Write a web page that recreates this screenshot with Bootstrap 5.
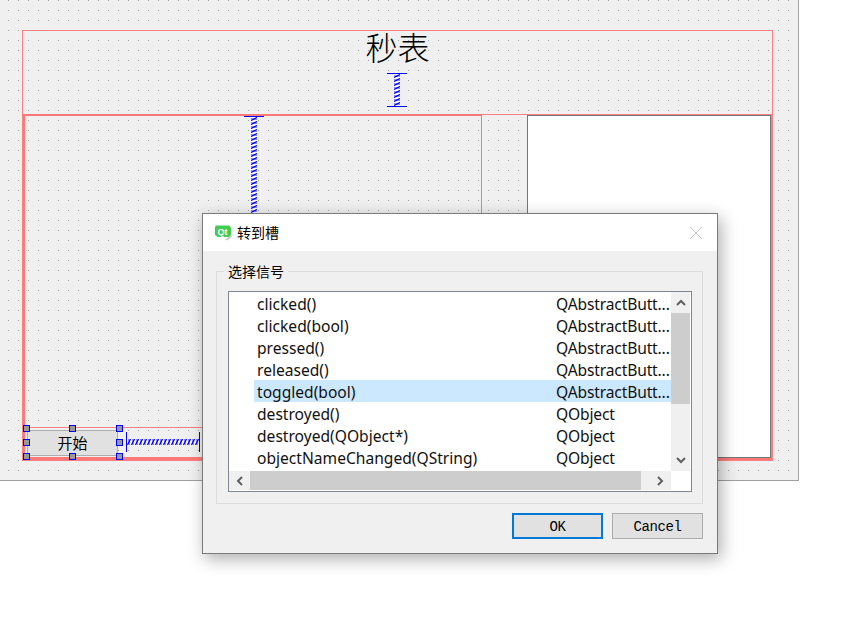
<!DOCTYPE html>
<html lang="zh">
<head>
<meta charset="utf-8">
<title>转到槽</title>
<link rel="stylesheet" href="https://cdn.jsdelivr.net/npm/bootstrap@5.3.0/dist/css/bootstrap.min.css">
<style>
html,body{margin:0;background:#fff;overflow:hidden}
body{width:855px;height:636px;position:relative;font-family:"Noto Sans","Noto Sans CJK SC",sans-serif;color:#000}
.form-sheet{width:799px;height:481px;padding:30px 0 0 22px;background-color:#f0f0f0;border-right:1px solid #a0a0a0;border-bottom:1px solid #a0a0a0;
 background-image:url("data:image/svg+xml,%3Csvg xmlns='http://www.w3.org/2000/svg' width='10' height='10'%3E%3Crect x='8' y='0' width='1' height='1' fill='%23a0a0a0'/%3E%3C/svg%3E")}
.outer-lay{width:751px;height:431px;border:1px solid #ff8080}
.title-zone{height:83px}
.title-txt{font-family:"Noto Sans CJK SC",sans-serif;font-size:32px;line-height:36px;margin-top:-3px;color:#000;font-weight:300}
.v-spring{width:20px;background:url("data:image/svg+xml,%3Csvg xmlns='http://www.w3.org/2000/svg' width='6' height='4'%3E%3Crect width='6' height='4' fill='%23fff' fill-opacity='.7'/%3E%3Cpath d='M0 3.500L6 .5' stroke='%230000ff' stroke-width='1.300' fill='none'/%3E%3Cpath d='M0 1.500L6 2.500' stroke='%230000ff' stroke-width='.5' fill='none'/%3E%3C/svg%3E") center top/6px 4px repeat-y;border-top:1px solid #00f;border-bottom:1px solid #00f}
.v-spring.short{height:34px;margin-top:9px;margin-right:1px}
.v-spring.long{height:98px;margin-left:219px;border-bottom:0}
.main-row{height:346px}
.left-lay{width:459px;border:2px solid #ff7878;border-right-width:1px;border-bottom-width:3px}
.btn-row{width:179px;height:30px;border-top:1px solid #ff8080;border-right:1px solid #ff8080;padding:1px 0 0 2px}
.start-wrap{position:relative;width:91px;height:26px}
.start-btn{width:91px;height:26px;padding:0;border-radius:0;background:#e1e1e1;border:1px solid #adadad;font-family:"Noto Sans CJK SC",sans-serif;font-size:15px;line-height:22px;color:#000}
.grab{position:absolute;width:7px;height:7px;background:#999;border:1px solid #00f}
.g1{left:-4px;top:-4px}.g2{left:42px;top:-4px}.g3{left:89px;top:-4px}
.g4{left:-4px;top:10px}.g5{left:89px;top:10px}
.g6{left:-4px;top:24px}.g7{left:42px;top:24px}.g8{left:89px;top:24px}
.h-spring{width:74px;height:20px;margin:3px 0 0 8px;border-left:1px solid #00f;border-right:1px solid #00f;background:url("data:image/svg+xml,%3Csvg xmlns='http://www.w3.org/2000/svg' width='4' height='6'%3E%3Crect width='4' height='6' fill='%23fff' fill-opacity='.7'/%3E%3Cpath d='M.5 6L3.500 0' stroke='%230000ff' stroke-width='1.300' fill='none'/%3E%3Cpath d='M1.500 0L2.500 6' stroke='%230000ff' stroke-width='.5' fill='none'/%3E%3C/svg%3E") left center/4px 6px repeat-x}
.gap-zone{width:45px;border-top:1px solid #ff8080}
.text-pane{width:244px;background:#fff;border:1px solid #777}
.right-lay{border-top:1px solid #ff8080;border-bottom:2px solid #ff7878;border-right:1px solid #ff7878;display:flex}
.dlg{position:absolute;left:202px;top:213px;width:516px;height:341px;background:#f0f0f0;border:1px solid #7a7a7a;box-shadow:3px 5px 16px rgba(0,0,0,.32)}
.dlg-head{height:37px;background:#fff;padding-left:11px;gap:5px}
.dlg-title{font-family:"Noto Sans CJK SC",sans-serif;font-size:14px;line-height:37px;color:#000}
.dlg-x{margin-left:auto;margin-right:14px}
.sig-group{position:relative;margin:20px 14px 0 13px;height:233px;border:1px solid #dcdcdc}
.sig-legend{position:absolute;left:7px;top:-10px;padding:0 4px;background:#f0f0f0;font-family:"Noto Sans CJK SC",sans-serif;font-size:14px;line-height:18px}
.sig-frame{margin:19px 0 0 11px;width:464px;height:201px;border:1px solid #7f8790;background:#fff;display:grid;grid-template-columns:442px 19px;grid-template-rows:179px 19px;padding-right:1px}
.sig-list{padding-left:25px;overflow:hidden}
.sig-item{height:22px;display:flex;align-items:center;padding:2px 0 0 3px;border:0;border-radius:0;background:transparent;font-size:15.6px;line-height:20px;color:#111;width:417px;white-space:nowrap;overflow:hidden}
.sig-item.picked{background:#cce8ff}
.sig-name{width:299px;flex:none}
.sig-type{letter-spacing:-.15px}
.bar-v{background:#f0f0f0;display:flex;flex-direction:column}
.bar-h{background:#f0f0f0;display:flex}
.arrow-cell{width:19px;height:21px;display:flex;align-items:center;justify-content:center;flex:none}
.arrow-cell.side{width:21px;height:19px}
.thumb-v{height:91px;background:#cdcdcd}
.thumb-h{width:391px;background:#cdcdcd;height:19px}
.dlg-foot{margin:9px 14px 0 0;gap:9px}
.act-btn{width:91px;height:26px;padding:2px 0 0;border-radius:0;background:#e1e1e1;border:1px solid #adadad;font-family:"Liberation Mono",monospace;font-size:14px;letter-spacing:-.4px;line-height:20px;color:#000}
.act-btn.prime{border:2px solid #0078d7}
</style>
</head>
<body>
<div class="form-sheet">
  <div class="outer-lay d-flex flex-column">
    <div class="title-zone d-flex flex-column align-items-center">
      <div class="title-txt">秒表</div>
      <div class="v-spring short"></div>
    </div>
    <div class="main-row d-flex">
      <div class="left-lay d-flex flex-column justify-content-between">
        <div class="v-spring long"></div>
        <div class="btn-row d-flex">
          <div class="start-wrap">
            <button type="button" class="btn start-btn">开始</button>
            <span class="grab g1"></span><span class="grab g2"></span><span class="grab g3"></span>
            <span class="grab g4"></span><span class="grab g5"></span>
            <span class="grab g6"></span><span class="grab g7"></span><span class="grab g8"></span>
          </div>
          <div class="h-spring"></div>
        </div>
      </div>
      <div class="gap-zone"></div>
      <div class="right-lay flex-grow-1"><div class="text-pane"></div></div>
    </div>
  </div>
</div>

<div class="dlg d-flex flex-column">
  <div class="dlg-head d-flex align-items-center">
    <svg width="18" height="17" viewBox="0 0 18 17" aria-hidden="true">
      <path d="M2 1.500H15L17 3.500V11L15 13H4L1 11V3Z" fill="#41cd52"/>
      <path d="M11 15.500L17 11.500L18 13L13 16.500Z" fill="#c8c8c8"/>
      <text x="3.500" y="10.500" font-family="Liberation Sans" font-size="9" font-weight="700" fill="#fff">Qt</text>
    </svg>
    <span class="dlg-title">转到槽</span>
    <svg class="dlg-x" width="14" height="14" viewBox="0 0 14 14" aria-hidden="true"><path d="M1 1L13 13M13 1L1 13" stroke="#c4c4c4" stroke-width="1" fill="none"/></svg>
  </div>
  <div class="sig-group">
    <div class="sig-legend">选择信号</div>
    <div class="sig-frame">
      <div class="sig-list">
        <div class="list-group list-group-flush">
          <div class="list-group-item sig-item"><span class="sig-name">clicked()</span><span class="sig-type">QAbstractButt...</span></div>
          <div class="list-group-item sig-item"><span class="sig-name">clicked(bool)</span><span class="sig-type">QAbstractButt...</span></div>
          <div class="list-group-item sig-item"><span class="sig-name">pressed()</span><span class="sig-type">QAbstractButt...</span></div>
          <div class="list-group-item sig-item"><span class="sig-name">released()</span><span class="sig-type">QAbstractButt...</span></div>
          <div class="list-group-item sig-item picked"><span class="sig-name">toggled(bool)</span><span class="sig-type">QAbstractButt...</span></div>
          <div class="list-group-item sig-item"><span class="sig-name">destroyed()</span><span class="sig-type">QObject</span></div>
          <div class="list-group-item sig-item"><span class="sig-name">destroyed(QObject*)</span><span class="sig-type">QObject</span></div>
          <div class="list-group-item sig-item"><span class="sig-name">objectNameChanged(QString)</span><span class="sig-type">QObject</span></div>
        </div>
      </div>
      <div class="bar-v">
        <div class="arrow-cell"><svg width="10" height="7" viewBox="0 0 10 7" aria-hidden="true"><path d="M1 6L5 2L9 6" stroke="#606060" stroke-width="2" fill="none"/></svg></div>
        <div class="thumb-v"></div>
        <div class="flex-grow-1"></div>
        <div class="arrow-cell"><svg width="10" height="7" viewBox="0 0 10 7" aria-hidden="true"><path d="M1 1L5 5L9 1" stroke="#606060" stroke-width="2" fill="none"/></svg></div>
      </div>
      <div class="bar-h">
        <div class="arrow-cell side"><svg width="7" height="10" viewBox="0 0 7 10" aria-hidden="true"><path d="M6 1L2 5L6 9" stroke="#606060" stroke-width="2" fill="none"/></svg></div>
        <div class="thumb-h"></div>
        <div class="flex-grow-1"></div>
        <div class="arrow-cell side"><svg width="7" height="10" viewBox="0 0 7 10" aria-hidden="true"><path d="M1 1L5 5L1 9" stroke="#606060" stroke-width="2" fill="none"/></svg></div>
      </div>
      <div></div>
    </div>
  </div>
  <div class="dlg-foot d-flex justify-content-end">
    <button type="button" class="btn act-btn prime">OK</button>
    <button type="button" class="btn act-btn">Cancel</button>
  </div>
</div>
</body>
</html>
